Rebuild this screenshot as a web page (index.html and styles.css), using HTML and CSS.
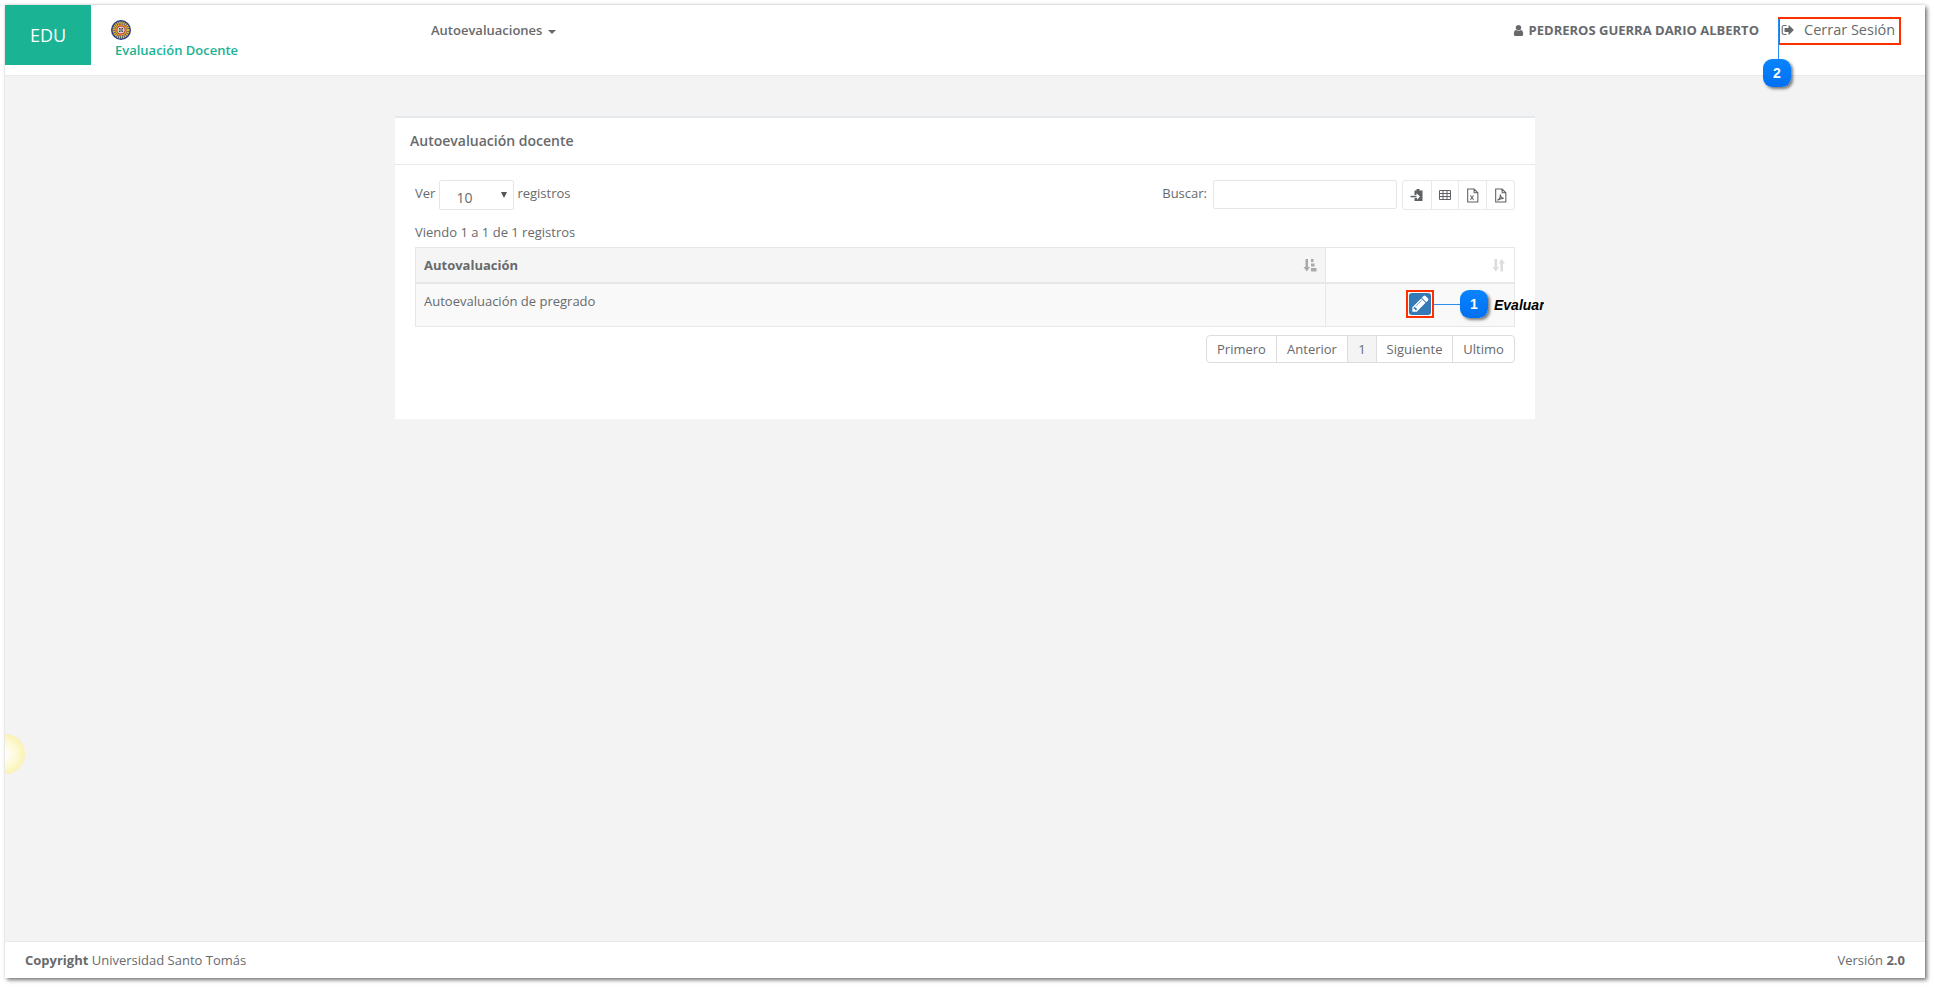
FILE: index.html
```html
<!DOCTYPE html>
<html lang="es">
<head>
<meta charset="utf-8">
<title>Evaluación Docente</title>
<link rel="stylesheet" href="styles.css">
</head>
<body>
<div class="frame">
  <header class="navbar">
    <div class="edu">EDU</div>
    <div class="brand">
      <svg class="logo" viewBox="0 0 20 20" width="20" height="20">
        <circle cx="10" cy="10" r="10" fill="#2b3f7e"/>
        <circle cx="10" cy="10" r="7.200" fill="none" stroke="#f2c12e" stroke-width="2.600" stroke-dasharray="1.300 .7"/>
        <circle cx="10" cy="10" r="5.800" fill="#f2a92e"/>
        <circle cx="10" cy="10" r="4.600" fill="#c8322b"/>
        <circle cx="10" cy="10" r="3.600" fill="#d2d2d2"/>
        <path d="M8 8h1.500v1.500H8zM10.500 8H12v1.500h-1.500zM9.500 9.500h1v1h-1zM8 10.500h1.500V12H8zM10.500 10.500H12V12h-1.500z" fill="#444"/>
      </svg>
      <span class="brand-name">Evaluación Docente</span>
    </div>
    <nav class="menu">Autoevaluaciones <span class="caret"></span></nav>
    <div class="nav-right">
      <span class="user">
        <svg class="ico" viewBox="0 0 1792 1792" width="13" height="13"><path d="M1536 1399q0 109-62.500 187t-150.500 78h-854q-88 0-150.500-78t-62.500-187q0-85 8.500-160.500t31.500-152 58.500-131 94-89 134.500-34.500q131 128 313 128t313-128q76 0 134.500 34.500t94 89 58.500 131 31.500 152 8.500 160.500zm-256-887q0 159-112.500 271.500t-271.500 112.500-271.500-112.500-112.500-271.500 112.500-271.500 271.500-112.500 271.500 112.500 112.500 271.500z"/></svg>
        PEDREROS GUERRA DARIO ALBERTO
      </span>
      <span class="logout">
        <svg class="ico" viewBox="0 0 1792 1792" width="14" height="14"><path d="M704 1440q0 4 1 20t.5 26.500-1.500 23.500-5 18.500-12 5.500h-320q-119 0-203.500-84.500t-84.500-203.500v-704q0-119 84.500-203.500t203.500-84.500h320q13 0 22.500 9.500t9.500 22.500q0 4 1 20t.5 26.500-1.500 23.500-5 18.500-12 5.500h-320q-66 0-113 47t-47 113v704q0 66 47 113t113 47h312l11.500 1 11.500 3 8 5.500 7 9 2 13.500zm928-544q0 26-19 45l-544 544q-19 19-45 19t-45-19-19-45v-288h-448q-26 0-45-19t-19-45v-384q0-26 19-45t45-19h448v-288q0-26 19-45t45-19 45 19l544 544q19 19 19 45z"/></svg>
        <span class="logout-text">Cerrar Sesión</span>
      </span>
    </div>
  </header>

  <main class="content">
    <section class="panel">
      <h2 class="panel-title">Autoevaluación docente</h2>
      <div class="panel-body">
        <div class="controls">
          <div class="length">
            <span>Ver</span>
            <span class="select"><span class="select-value">10</span><span class="select-arrow"></span></span>
            <span>registros</span>
          </div>
          <div class="filter">
            <label class="search-label" for="q">Buscar:</label>
            <input class="search" id="q" type="text">
            <div class="tools">
              <span class="tool">
                <svg viewBox="0 0 14 14" width="14" height="14"><path class="solid" d="M4.500 2.500h2V1h3v1.500h3V13h-8V10h2.500v1.800L10 8.500 6.500 5.200V7H4.500z"/><path class="solid" d="M.5 7.800h6v1.500h-6z"/></svg>
              </span>
              <span class="tool">
                <svg viewBox="0 0 14 14" width="14" height="14"><path class="line" d="M1.500 2.500h11v9h-11zM1.500 5.500h11M1.500 8.500h11M5 2.500v9M9 2.500v9"/></svg>
              </span>
              <span class="tool">
                <svg viewBox="0 0 14 14" width="15" height="15"><path class="line" d="M2.500 1h6l3.500 3.500V13h-9.500zM8.500 1v3.500H12"/><path class="line" d="M5 7l3 4M8 7l-3 4"/></svg>
              </span>
              <span class="tool">
                <svg viewBox="0 0 14 14" width="15" height="15"><path class="line" d="M2.500 1h6l3.500 3.500V13h-9.500zM8.500 1v3.500H12"/><path class="line" d="M4 11.500c2-1 3-3.500 2.800-5.500 .3 2 1.500 3.500 3.200 3.700-2-.1-4 .5-6 1.800z"/></svg>
              </span>
            </div>
          </div>
        </div>
        <p class="info">Viendo 1 a 1 de 1 registros</p>
        <table class="grid">
          <thead>
            <tr>
              <th class="col-name">
                <span class="th-inner">Autovaluación
                  <svg viewBox="0 0 14 14" width="14" height="14"><path class="sort-on" d="M2.500 1h2.500v8h2L3.800 13.500.5 9h2zM8 1h2.500v3H8zM8 5.500h3.500v3H8zM8 10h5.500v3.500H8z"/></svg>
                </span>
              </th>
              <th class="col-action">
                <span class="th-inner th-right">
                  <svg viewBox="0 0 14 14" width="14" height="14"><path class="sort-off" d="M2.500 1h2.500v8h2L3.800 13.500.5 9h2zM11 13.500H8.500v-8h-2L9.800 1 13 5.500h-2z"/></svg>
                </span>
              </th>
            </tr>
          </thead>
          <tbody>
            <tr>
              <td class="cell-name">Autoevaluación de pregrado</td>
              <td class="cell-action">
                <span class="edit-mark">
                  <span class="edit-btn">
                    <svg viewBox="0 0 1792 1792" width="19" height="19"><path d="M491 1536l91-91-235-235-91 91v107h128v128h107zm523-928q0-22-22-22-10 0-17 7l-542 542q-7 7-7 17 0 22 22 22 10 0 17-7l542-542q7-7 7-17zm-54-192l416 416-832 832h-416v-416zm683 96q0 53-37 90l-166 166-416-416 166-165q36-38 90-38 53 0 91 38l235 234q37 39 37 91z"/></svg>
                  </span>
                </span>
              </td>
            </tr>
          </tbody>
        </table>
        <div class="pager-row">
          <div class="pager">
            <span class="page page-first">Primero</span>
            <span class="page page-prev">Anterior</span>
            <span class="page page-current">1</span>
            <span class="page page-next">Siguiente</span>
            <span class="page page-last">Ultimo</span>
          </div>
        </div>
      </div>
    </section>
  </main>

  <footer class="footer">
    <span><strong>Copyright</strong> Universidad Santo Tomás</span>
    <span>Versión <strong>2.0</strong></span>
  </footer>

  <span class="sun"></span>
  <span class="marker-box"></span>
  <span class="leader leader-two"></span>
  <span class="badge badge-two">2</span>
  <span class="leader leader-one"></span>
  <span class="badge badge-one">1</span>
  <span class="callout">Evaluar</span>
</div>
</body>
</html>
```

FILE: styles.css
```css
* { box-sizing: border-box; }

html, body { margin: 0; height: 100%; background: #fff; overflow: hidden; }

body {
  padding: 5px 9px 10px 5px;
  font-family: "Open Sans", sans-serif;
  font-size: 13px;
  color: #676a6c;
}

.frame {
  position: relative;
  height: 100%;
  display: flex;
  flex-direction: column;
  background: #f3f3f4;
  box-shadow: 2px 2px 4px rgba(0, 0, 0, .55), 0 -1px 2px rgba(0, 0, 0, .08);
}

/* navbar */
.navbar {
  flex: 0 0 71px;
  display: flex;
  align-items: flex-start;
  background: #fff;
  border-bottom: 1px solid #e7eaec;
}

.edu {
  width: 86px;
  height: 60px;
  background: #1ab394;
  color: #fff;
  font-size: 18px;
  display: flex;
  align-items: center;
  justify-content: center;
}

.brand {
  width: 340px;
  padding: 15px 0 0 20px;
  display: flex;
  flex-direction: column;
  align-items: flex-start;
}

.logo { display: block; }

.brand-name {
  margin: 1px 0 0 4px;
  color: #1ab394;
  font-weight: 600;
  font-size: 13px;
  line-height: 18px;
}

.menu {
  padding-top: 15px;
  font-weight: 600;
  font-size: 13px;
  line-height: 20px;
}

.caret {
  display: inline-block;
  margin-left: 2px;
  vertical-align: middle;
  border-top: 4px solid #676a6c;
  border-left: 4px solid transparent;
  border-right: 4px solid transparent;
}

.nav-right {
  margin-left: auto;
  padding: 14px 25px 0 0;
  display: flex;
  align-items: center;
  line-height: 22px;
}

.ico { fill: #676a6c; vertical-align: -2px; }

.user { font-weight: 700; font-size: 13px; }

.logout {
  width: 119px;
  margin-left: 22px;
  font-size: 14.500px;
  display: flex;
  align-items: center;
}

.logout-text { margin-left: 9px; }

/* content */
.content {
  flex: 1;
  padding-top: 40px;
  display: flex;
  justify-content: center;
  align-items: flex-start;
}

.panel {
  width: 1140px;
  height: 303px;
  background: #fff;
  border-top: 2px solid #e7eaec;
}

.panel-title {
  margin: 0;
  height: 47px;
  padding: 0 15px;
  font-size: 14px;
  font-weight: 600;
  line-height: 45px;
  border-bottom: 1px solid #e7eaec;
}

.panel-body { padding: 15px 20px 0; }

.controls {
  display: flex;
  justify-content: space-between;
  align-items: flex-start;
}

.length, .filter { display: flex; align-items: flex-start; line-height: 26px; }

.select {
  position: relative;
  width: 75px;
  height: 30px;
  margin: 0 3px 0 4px;
  border: 1px solid #e5e6e7;
  border-radius: 2px;
  display: block;
}

.select-value {
  position: absolute;
  left: 16px;
  top: 5px;
  font-size: 14px;
  line-height: 24px;
  color: #676a6c;
}

.select-arrow {
  position: absolute;
  right: 6px;
  top: 11px;
  border-top: 6px solid #555;
  border-left: 3px solid transparent;
  border-right: 3px solid transparent;
}

.search-label { margin-right: 6px; }

.search {
  width: 184px;
  height: 29px;
  border: 1px solid #e5e6e7;
  border-radius: 2px;
  background: #fff;
  padding: 0 8px;
}

.tools {
  margin-left: 5px;
  width: 113px;
  height: 30px;
  display: flex;
  border: 1px solid #e7eaec;
  border-radius: 3px;
}

.tool {
  width: 28px;
  display: flex;
  align-items: center;
  justify-content: center;
  border-left: 1px solid #e7eaec;
}

.tool:nth-child(2) { width: 27px; }
.tool:last-child { width: 28px; }
.tool:first-child { border-left: 0; }

.solid { fill: #5f6163; }
.line { fill: none; stroke: #5f6163; stroke-width: 1; }

.info {
  margin: 12px 0 0;
  line-height: 20px;
}

.grid {
  margin-top: 5px;
  width: 1100px;
  border-collapse: collapse;
  table-layout: fixed;
}

.grid th, .grid td {
  border: 1px solid #e7e7e7;
  padding: 0 8px;
  vertical-align: top;
}

.grid th {
  height: 35px;
  border-bottom-width: 2px;
  text-align: left;
  font-weight: 700;
}

.col-name { width: 910px; background: #f5f5f6; }
.col-action { background: #fff; }

.th-inner {
  display: flex;
  justify-content: space-between;
  align-items: center;
  height: 33px;
}

.th-right { justify-content: flex-end; }

.sort-on { fill: #a9a9a9; }
.sort-off { fill: #dcdcdc; }

.grid td {
  height: 44px;
  background: #f9f9f9;
}

.grid .cell-name { padding-top: 7px; line-height: 20px; }

.cell-action { text-align: right; }

.edit-mark {
  position: relative;
  display: inline-flex;
  margin: 6px 72px 0 0;
  padding: 3px;
  width: 28px;
  height: 28px;
  vertical-align: top;
}

.edit-mark::after {
  content: "";
  position: absolute;
  inset: 0;
  border: 2px solid #ff3000;
}

.edit-btn {
  width: 22px;
  height: 22px;
  background: #337ab7;
  border-radius: 3px;
  display: flex;
  align-items: center;
  justify-content: center;
}

.edit-btn svg { fill: #fff; }

.pager-row {
  margin-top: 8px;
  display: flex;
  justify-content: flex-end;
}

.pager {
  display: flex;
  width: 309px;
  height: 28px;
  border: 1px solid #ddd;
  border-radius: 4px;
  line-height: 26px;
  background: #fff;
}

.page {
  text-align: center;
  border-left: 1px solid #ddd;
}

.page-first { width: 69px; border-left: 0; }
.page-prev { width: 71px; }
.page-current { width: 29px; background: #f4f4f4; }
.page-next { width: 76px; }
.page-last { flex: 1; }

/* footer */
.footer {
  flex: 0 0 37px;
  display: flex;
  justify-content: space-between;
  align-items: center;
  padding: 0 20px;
  background: #fff;
  border-top: 1px solid #e7eaec;
}

/* annotations over the page */
.sun {
  position: absolute;
  left: 0;
  top: 729px;
  width: 20px;
  height: 40px;
  border-radius: 0 20px 20px 0;
  background: radial-gradient(circle at 0 50%, #fff 0, #fdf9d2 45%, #f8efa6 80%, #f5d36e 100%);
}

.marker-box {
  position: absolute;
  left: 1773px;
  top: 12px;
  width: 123px;
  height: 28px;
  border: 2px solid #ff3000;
}

.leader { position: absolute; background: #2a8cf0; }

.leader-two { left: 1773px; top: 14px; width: 1px; height: 40px; }

.leader-one { left: 1429px; top: 299px; width: 26px; height: 1px; }

.badge {
  position: absolute;
  width: 28px;
  height: 28px;
  border-radius: 9px;
  background: linear-gradient(#0a84ff, #0070f0);
  color: #fff;
  font: 700 14px/28px "Liberation Sans", sans-serif;
  text-align: center;
  box-shadow: 2px 2px 3px rgba(0, 0, 0, .5);
}

.badge-two { left: 1758px; top: 54px; }
.badge-one { left: 1455px; top: 285px; }

.callout {
  position: absolute;
  left: 1489px;
  top: 292px;
  width: 50px;
  height: 16px;
  overflow: hidden;
  white-space: nowrap;
  color: #000;
  font: italic 700 14px/16px "Liberation Sans", sans-serif;
}
```
